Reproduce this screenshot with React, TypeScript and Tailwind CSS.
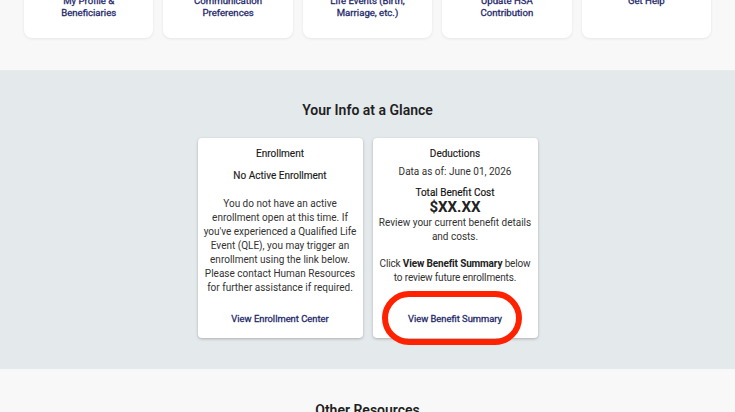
import React from 'react';

const quickLinks = [
  ['My Profile &', 'Beneficiaries'],
  ['Communication', 'Preferences'],
  ['Life Events (Birth,', 'Marriage, etc.)'],
  ['Update HSA', 'Contribution'],
  ['Get Help'],
];

const QuickLinkCard = ({ lines }: { lines: string[] }) => (
  <div className="h-[90px] bg-white rounded-[8px] shadow-[0_1px_3px_rgba(0,0,0,0.08)] flex flex-col items-center justify-end pb-[20px] text-center">
    {lines.map((l, i) => (
      <span key={i} className="text-[9.6px] leading-[11.5px] font-normal [-webkit-text-stroke:0.3px_#262a6b] text-[#262a6b]">
        {l}
      </span>
    ))}
    {lines.length === 1 && <span className="text-[10px] leading-[11.5px]">&nbsp;</span>}
  </div>
);

const GlanceCard = ({ children }: { children: React.ReactNode }) => (
  <div className="relative w-[165px] h-[200px] bg-white rounded-[4px] shadow-[0_1px_3px_rgba(0,0,0,0.25)] flex flex-col items-center text-center px-[5px] pt-[9px] text-[#222]">
    {children}
  </div>
);

export default function App() {
  return (
    <div className="w-[735px] h-[412px] overflow-hidden bg-[#f8f8f8] font-['Roboto',sans-serif]">
      <section className="h-[70px] overflow-hidden">
        <div className="-mt-[52px] grid grid-cols-5 gap-[10px] px-[24px]">
          {quickLinks.map((l, i) => (
            <QuickLinkCard key={i} lines={l} />
          ))}
        </div>
      </section>

      <section className="h-[299px] bg-[#e4e9ec] border-t border-[#eaeaea] flex flex-col items-center">
        <h2 className="mt-[29px] text-[14px] leading-[20px] font-semibold text-[#1f1f1f]">Your Info at a Glance</h2>
        <div className="mt-[18px] flex gap-[10px]">
          <GlanceCard>
            <div className="text-[10px] leading-[13px] font-normal text-[#1a1a1a] [-webkit-text-stroke:0.15px_#1a1a1a]">Enrollment</div>
            <div className="mt-[9px] text-[10px] leading-[13px] font-normal text-[#1a1a1a] [-webkit-text-stroke:0.15px_#1a1a1a]">No Active Enrollment</div>
            <p className="mt-[15px] text-[10px] leading-[14px] text-[#333]">
              You do not have an active enrollment open at this time. If you've experienced a Qualified Life Event (QLE), you may trigger an enrollment using the link below. Please contact Human Resources for further assistance if required.
            </p>
            <div className="mt-auto mb-[13px] text-[9.4px] leading-[13px] font-normal [-webkit-text-stroke:0.3px_#262a6b] text-[#262a6b]">View Enrollment Center</div>
          </GlanceCard>
          <GlanceCard>
            <div className="text-[10px] leading-[13px] font-normal text-[#1a1a1a] [-webkit-text-stroke:0.15px_#1a1a1a]">Deductions</div>
            <div className="mt-[5px] text-[10px] leading-[13px] text-[#333]">Data as of: June 01, 2026</div>
            <div className="mt-[9px] text-[10px] leading-[12px] font-normal text-[#111] [-webkit-text-stroke:0.15px_#111]">Total Benefit Cost</div>
            <div className="text-[15px] leading-[16px] font-bold">$XX.XX</div>
            <p className="mt-[1px] text-[10px] leading-[14px] text-[#333]">Review your current benefit details and costs.</p>
            <p className="mt-[13px] text-[10px] leading-[14px] text-[#333] tracking-[-0.15px]">
              Click <span className="font-bold text-[#222]">View Benefit Summary</span> below to review future enrollments.
            </p>
            <div className="mt-auto mb-[13px] text-[9.4px] leading-[13px] font-normal [-webkit-text-stroke:0.3px_#262a6b] text-[#262a6b]">View Benefit Summary</div>
            <span className="absolute left-[9px] top-[153px] w-[140px] h-[54px] rounded-full border-[6px] border-[#ff2200]" />
          </GlanceCard>
        </div>
      </section>

      <section className="flex justify-center">
        <h2 className="mt-[31px] text-[14px] leading-[20px] font-semibold text-[#1f1f1f]">Other Resources</h2>
      </section>
    </div>
  );
}
